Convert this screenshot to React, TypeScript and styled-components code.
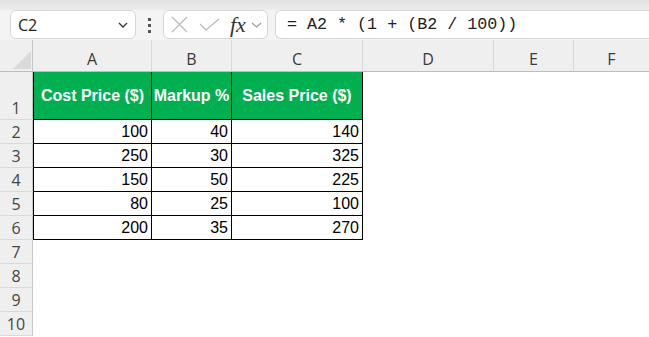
import React from "react";
import styled, { createGlobalStyle, css } from "styled-components";

const GlobalStyle = createGlobalStyle`
  html, body {
    margin: 0;
    padding: 0;
    background: #ffffff;
    overflow: hidden;
  }
`;

const cellFont = `"Liberation Sans", Arial, sans-serif`;
const uiFont = `"Open Sans", "Noto Sans", sans-serif`;

const columns = ["A", "B", "C", "D", "E", "F"];
const headings = ["Cost Price ($)", "Markup %", "Sales Price ($)"];
const rows = [
  [100, 40, 140],
  [250, 30, 325],
  [150, 50, 225],
  [80, 25, 100],
  [200, 35, 270],
];

export default function App() {
  return (
    <Shell>
      <GlobalStyle />
      <TopStrip />
      <Toolbar>
        <NameBox>
          <span>C2</span>
          <svg width="10" height="6" viewBox="0 0 10 6">
            <path d="M1 1 L5 5 L9 1" fill="none" stroke="#333" strokeWidth="1.3" />
          </svg>
        </NameBox>
        <Dots>
          <i />
          <i />
          <i />
        </Dots>
        <FxBox>
          <svg width="17" height="17" viewBox="0 0 17 17">
            <path d="M1 1 L16 16 M16 1 L1 16" stroke="#bdbdbd" strokeWidth="1.3" fill="none" />
          </svg>
          <svg width="21" height="13" viewBox="0 0 21 13">
            <path d="M1 6 L7 12 L20 1" stroke="#bdbdbd" strokeWidth="1.3" fill="none" />
          </svg>
          <FxLabel>fx</FxLabel>
          <svg width="11" height="6" viewBox="0 0 11 6">
            <path d="M1 1 L5.5 5 L10 1" fill="none" stroke="#9a9a9a" strokeWidth="1.1" />
          </svg>
        </FxBox>
        <FormulaBar>= A2 * (1 + (B2 / 100))</FormulaBar>
      </Toolbar>

      <Sheet>
        <Corner>
          <Triangle />
        </Corner>
        {columns.map((c, i) => (
          <ColHeader key={c} $last={i === columns.length - 1}>
            {c}
          </ColHeader>
        ))}

        <RowHeader>1</RowHeader>
        {headings.map((h, i) => (
          <Cell key={h} $kind="head" $first={i === 0}>
            {h}
          </Cell>
        ))}
        <Cell $kind="blank" />
        <Cell $kind="blank" />
        <Cell $kind="blank" />

        {rows.map((r, ri) => (
          <React.Fragment key={ri}>
            <RowHeader>{ri + 2}</RowHeader>
            {r.map((v, i) => (
              <Cell key={i} $kind="num" $first={i === 0}>
                {v}
              </Cell>
            ))}
            <Cell $kind="blank" />
            <Cell $kind="blank" />
            <Cell $kind="blank" />
          </React.Fragment>
        ))}

        {[7, 8, 9, 10].map((n) => (
          <React.Fragment key={n}>
            <RowHeader>{n}</RowHeader>
            {columns.map((c) => (
              <Cell key={c} $kind="blank" />
            ))}
          </React.Fragment>
        ))}
      </Sheet>
    </Shell>
  );
}

const Shell = styled.div`
  width: 649px;
  height: 337px;
  overflow: hidden;
  background: #ffffff;
`;

const TopStrip = styled.div`
  height: 10px;
  background: linear-gradient(#e2e2e2, #ececec);
`;

const Toolbar = styled.div`
  display: flex;
  align-items: flex-start;
  height: 30px;
  background: #f4f4f4;
  box-sizing: border-box;
`;

const box = css`
  height: 29px;
  box-sizing: border-box;
  background: #ffffff;
  border: 1px solid #d6d6d6;
`;

const NameBox = styled.div`
  ${box}
  width: 126px;
  margin-left: 10px;
  border-radius: 6px;
  display: flex;
  align-items: center;
  justify-content: space-between;
  padding: 0 7px 0 7px;
  font-family: ${uiFont};
  font-size: 16px;
  color: #222;
`;

const Dots = styled.div`
  display: flex;
  flex-direction: column;
  gap: 3px;
  margin: 8px 0 0 12px;
  i {
    display: block;
    width: 3px;
    height: 3px;
    background: #555;
  }
`;

const FxBox = styled.div`
  ${box}
  width: 105px;
  margin-left: 12px;
  border-radius: 6px;
  display: flex;
  align-items: center;
  padding: 0 3px 0 7px;
  svg:nth-child(1) {
    margin-right: 11px;
  }
  svg:nth-child(2) {
    margin-right: 10px;
  }
`;

const FxLabel = styled.span`
  font-family: "Liberation Serif", "DejaVu Serif", serif;
  font-style: italic;
  font-size: 22px;
  color: #333;
  margin-right: 5px;
  line-height: 1;
`;

const FormulaBar = styled.div`
  ${box}
  flex: 1;
  margin-left: 7px;
  border-right: none;
  border-radius: 6px 0 0 6px;
  display: flex;
  align-items: center;
  padding-left: 11px;
  font-family: "Liberation Mono", "DejaVu Sans Mono", monospace;
  font-size: 16.7px;
  color: #222;
  white-space: pre;
`;

const Sheet = styled.div`
  display: grid;
  grid-template-columns: 33px 119px 80px 131px 131px 80px 1fr;
  grid-template-rows: 32px 48px repeat(9, 24px);
`;

const headerBg = "#efefef";

const Corner = styled.div`
  background: ${headerBg};
  border-bottom: 1px solid #bdbdbd;
  border-right: 1px solid #c6c6c6;
  box-sizing: border-box;
  display: flex;
  align-items: flex-end;
  justify-content: flex-end;
  padding: 0 1px 2px 0;
`;

const Triangle = styled.div`
  width: 18px;
  height: 18px;
  background: #dadada;
  clip-path: polygon(100% 0, 100% 100%, 0 100%);
`;

const ColHeader = styled.div<{ $last?: boolean }>`
  background: ${headerBg};
  border-bottom: 1px solid #bdbdbd;
  border-right: ${(p) => (p.$last ? "none" : "1px solid #d8d8d8")};
  box-sizing: border-box;
  display: flex;
  align-items: flex-end;
  justify-content: center;
  padding-bottom: 1px;
  font-family: ${uiFont};
  font-size: 16px;
  color: #3a3a3a;
`;

const RowHeader = styled.div`
  background: ${headerBg};
  border-right: 1px solid #c6c6c6;
  border-bottom: 1px solid #d9d9d9;
  box-sizing: border-box;
  display: flex;
  align-items: flex-end;
  justify-content: center;
  font-family: ${uiFont};
  font-size: 16px;
  line-height: 22px;
  color: #444;
`;

const Cell = styled.div<{ $kind: "head" | "num" | "blank"; $first?: boolean }>`
  box-sizing: border-box;
  font-family: ${cellFont};
  font-size: 16px;
  display: flex;
  ${(p) =>
    p.$kind !== "blank" &&
    css`
      border-right: 1px solid #000;
      border-bottom: 1px solid #000;
      border-left: ${p.$first ? "1px solid #000" : "none"};
    `}
  ${(p) =>
    p.$kind === "head" &&
    css`
      background: #00b050;
      color: #ffffff;
      font-weight: bold;
      align-items: center;
      justify-content: center;
      white-space: nowrap;
    `}
  ${(p) =>
    p.$kind === "num" &&
    css`
      background: #ffffff;
      color: #000;
      align-items: flex-end;
      justify-content: flex-end;
      padding: 0 3px 2px 0;
      line-height: 19px;
    `}
`;
